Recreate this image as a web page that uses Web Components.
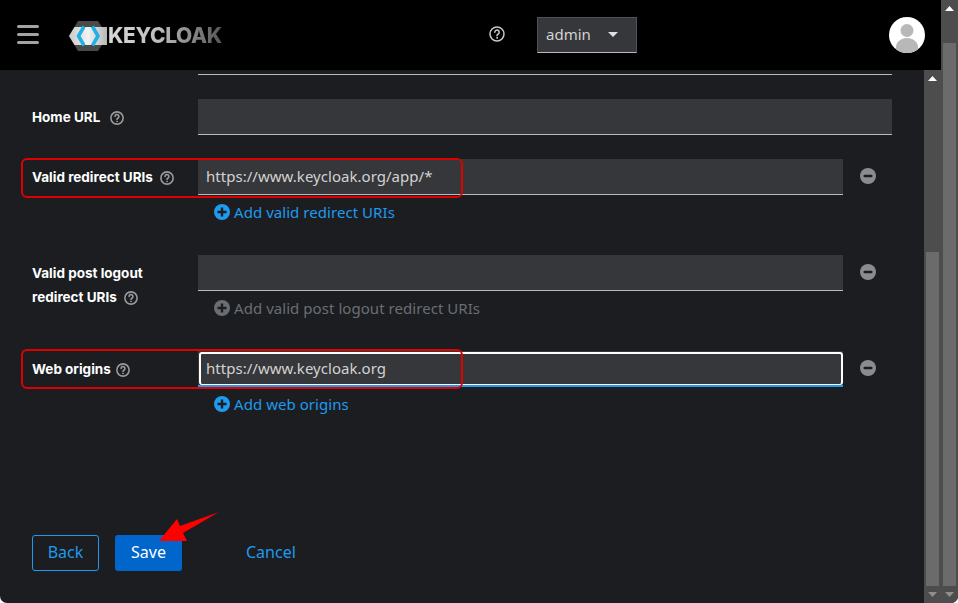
<!DOCTYPE html>
<html lang="en">
<head>
<meta charset="utf-8">
<title>Keycloak client settings</title>
<style>
  html, body { margin: 0; height: 603px; overflow: hidden; background: #fff; }
  body { font-family: "Inter", "Liberation Sans", sans-serif; color: #e0e0e0; }
</style>
</head>
<body>
<kc-app>
  <kc-header slot="header"></kc-header>
  <kc-form-row stub></kc-form-row>
  <kc-form-row label="Home URL" style="--help-gap:10px"><kc-input></kc-input></kc-form-row>
  <kc-form-row label="Valid redirect URIs" removable add="Add valid redirect URIs">
    <kc-input>https://www.keycloak.org/app/*</kc-input>
  </kc-form-row>
  <kc-form-row label="Valid post logout redirect URIs" removable disabled add="Add valid post logout redirect URIs">
    <kc-input></kc-input>
  </kc-form-row>
  <kc-form-row label="Web origins" removable add="Add web origins" style="--help-gap:5px">
    <kc-input focused>https://www.keycloak.org</kc-input>
  </kc-form-row>
  <kc-actions></kc-actions>
  <kc-callout slot="overlay" style="left:21px;top:88px;width:442px;height:40px"></kc-callout>
  <kc-callout slot="overlay" style="left:21px;top:279px;width:442px;height:40px"></kc-callout>
  <kc-arrow slot="overlay"></kc-arrow>
</kc-app>

<script>
// small shared icons, all drawn on a 16 box
const helpIcon = (size, width = 1.5) => `<svg width="${size}" height="${size}" viewBox="0 0 16 16" fill="none" stroke="currentColor" stroke-width="${width}" stroke-linecap="round">
  <circle cx="8" cy="8" r="7"/>
  <path d="M5.800 6.200a2.200 2.200 0 1 1 3.500 1.800c-.8.500-1.300.9-1.300 1.800"/>
  <circle cx="8" cy="11.900" r=".5" stroke-width="1"/>
</svg>`

class KcScrollbar extends HTMLElement {
  constructor () {
    super()
    this.attachShadow({ mode: 'open' })
    this.shadowRoot.innerHTML = `<style>
      :host { display: flex; flex-direction: column; width: 17px; flex: none; background: #4d4d4d; }
      .end { height: 17px; flex: none; display: flex; align-items: center; justify-content: center; }
      .track { flex: 1; display: flex; flex-direction: column; padding: var(--thumb-offset, 0) 2px 0; min-height: 0; }
      .thumb { flex: 1; background: #6b6b6b; }
      svg { display: block; }
      .down { color: #8f8f8f; }
      .up { color: #fff; }
    </style>
    <div class="end up"><svg width="9" height="5" viewBox="0 0 9 5"><path d="M4.500 0 9 5H0z" fill="currentColor"/></svg></div>
    <div class="track"><div class="thumb"></div></div>
    <div class="end down"><svg width="9" height="5" viewBox="0 0 9 5"><path d="M0 0h9L4.500 5z" fill="currentColor"/></svg></div>`
  }
}
customElements.define('kc-scrollbar', KcScrollbar)

class KcHeader extends HTMLElement {
  constructor () {
    super()
    this.attachShadow({ mode: 'open' })
    this.shadowRoot.innerHTML = `<style>
      :host { display: flex; align-items: center; height: 70px; background: #000; flex: none; color: #b8bbbe; }
      .burger { margin-left: 17px; width: 22px; display: flex; flex-direction: column; gap: 5px; margin-top: -1px; }
      .burger i { display: block; height: 3px; border-radius: 1.500px; background: #a3a3a3; }
      .logo { display: flex; align-items: center; margin-left: 30px; width: 152px; margin-bottom: -1px; }
      .logo svg { flex: none; }
      .word { font: 800 21px/1 "Inter", "Liberation Sans", sans-serif; letter-spacing: -.4px;
        background: linear-gradient(90deg, #d8d8d8, #bdbdbd 45%, #555); -webkit-background-clip: text; background-clip: text; color: transparent; }
      .help { margin-left: 268px; margin-bottom: 2px; display: flex; color: #c8c8c8; }
      .select { margin-left: 32px; box-sizing: border-box; width: 100px; height: 36px; display: flex; align-items: center;
        background: #36373a; border: 1px solid #4f5255; border-bottom-color: #b8bbbe; padding: 0 0 2px 8px;
        font: 15px/1 "Noto Sans", sans-serif; color: #d2d2d2; }
      .select svg { margin-left: 17px; }
      .avatar { margin-left: auto; margin-right: 16px; width: 36px; height: 36px; display: block; }
    </style>
    <div class="burger"><i></i><i></i><i></i></div>
    <div class="logo">
      <svg width="39" height="30" viewBox="0 0 39 30">
        <defs><linearGradient id="band" x1="0" x2="1" y1="0" y2="0"><stop offset="0" stop-color="#c9c9c9"/><stop offset=".5" stop-color="#f2f2f2"/><stop offset="1" stop-color="#b5b5b5"/></linearGradient></defs>
        <path d="M9 0h20l9.500 15L29 30H9L0 15z" fill="#4a4a4a"/>
        <path d="M0 15 5.500 6H38v18H5.500z" fill="url(#band)"/>
        <path d="M15 5.500 9.500 15l5.500 9.500" fill="none" stroke="#1fb0e8" stroke-width="3.500"/>
        <path d="M23.500 5.500 29 15l-5.500 9.500" fill="none" stroke="#1fb0e8" stroke-width="3.500"/>
      </svg>
      <span class="word">KEYCLOAK</span>
    </div>
    <div class="help">${helpIcon(16)}</div>
    <div class="select">admin
      <svg width="10" height="5" viewBox="0 0 10 5"><path d="M0 0h10L5 5z" fill="#e0e0e0"/></svg>
    </div>
    <svg class="avatar" viewBox="0 0 36 36">
      <defs><clipPath id="c"><circle cx="18" cy="18" r="18"/></clipPath></defs>
      <circle cx="18" cy="18" r="18" fill="#fff"/>
      <g clip-path="url(#c)" fill="#b8b8b8">
        <circle cx="18" cy="13.500" r="6.500"/>
        <path d="M7 36v-6c0-5 5-9 11-9s11 4 11 9v6z"/>
      </g>
    </svg>`
  }
}
customElements.define('kc-header', KcHeader)

class KcInput extends HTMLElement {
  constructor () {
    super()
    this.attachShadow({ mode: 'open' })
    this.shadowRoot.innerHTML = `<style>
      :host { display: flex; flex: 1; min-width: 0; box-sizing: border-box; height: 36px; align-items: center; padding: 0 8px 1px;
        background: #36373a; border-bottom: 1px solid #b8bbbe; font-size: 15px; letter-spacing: .03px; color: #d2d2d2;
        font-family: "Noto Sans", sans-serif; position: relative; }
      :host([focused]) { border-bottom: 2px solid #1f9aee; }
      :host([focused])::after { content: ""; position: absolute; left: 1px; right: 0; top: 1px; bottom: 0;
        border: 2px solid #fff; border-bottom-width: 1px; border-radius: 3px; }
    </style><slot></slot>`
  }
}
customElements.define('kc-input', KcInput)

class KcFormRow extends HTMLElement {
  constructor () {
    super()
    this.attachShadow({ mode: 'open' })
  }

  connectedCallback () {
    const label = this.getAttribute('label')
    const add = this.getAttribute('add')
    const minus = this.hasAttribute('removable')
      ? `<svg class="minus" width="16" height="16" viewBox="0 0 16 16"><circle cx="8" cy="8" r="8" fill="#8a8d90"/><rect x="3.500" y="6.800" width="9" height="2.400" rx="1" fill="#1b1d21"/></svg>`
      : ''
    const addLink = add
      ? `<div class="add"><svg width="16" height="16" viewBox="0 0 16 16"><circle cx="8" cy="8" r="8" fill="currentColor"/><path d="M8 3.500v9M3.500 8h9" stroke="#1b1d21" stroke-width="2.400"/></svg><span>${add}</span></div>`
      : ''
    this.shadowRoot.innerHTML = `<style>
      :host { display: grid; grid-template-columns: 166px 1fr; margin-bottom: 24px; }
      :host([stub]) { height: 5px; }
      :host([stub]) .field { height: 5px; box-sizing: border-box; border-bottom: 1px solid #b8bbbe; }
      .label { padding: 6px 10px 0 0; font: 700 13.500px/24px "Inter", "Liberation Sans", sans-serif; color: #fff; }
      .q { display: inline-flex; vertical-align: -3px; margin-left: var(--help-gap, 7px); color: #9a9a9a; }
      .line { display: flex; align-items: flex-start; }
      .minus { flex: none; margin: 9px 16px 0 17px; }
      .add { box-sizing: border-box; height: 36px; padding: 0 0 2px 16px; display: flex; align-items: center; gap: 4px; color: #1f9aee;
        font: 15px/1 "Noto Sans", sans-serif; letter-spacing: .05px; }
      :host([disabled]) .add { color: #6a6e73; }
    </style>
    <div class="label">${label ? `${label}<span class="q">${helpIcon(14, 1.800)}</span>` : ''}</div>
    <div class="field">
      <div class="line"><slot></slot>${minus}</div>
      ${addLink}
    </div>`
  }
}
customElements.define('kc-form-row', KcFormRow)

class KcActions extends HTMLElement {
  constructor () {
    super()
    this.attachShadow({ mode: 'open' })
    this.shadowRoot.innerHTML = `<style>
      :host { display: flex; gap: 16px; margin-top: 112px; font: 16px/1 "Noto Sans", sans-serif; }
      div { box-sizing: border-box; height: 36px; padding-bottom: 2px; display: flex; align-items: center; justify-content: center; border-radius: 3px; }
      .back { width: 67px; border: 1px solid #1f9aee; color: #1f9aee; }
      .save { width: 67px; background: #06c; color: #fff; }
      .cancel { margin-left: 48px; color: #1f9aee; }
    </style>
    <div class="back">Back</div><div class="save">Save</div><div class="cancel">Cancel</div>`
  }
}
customElements.define('kc-actions', KcActions)

// red annotation rectangle lying over the form
class KcCallout extends HTMLElement {
  constructor () {
    super()
    this.attachShadow({ mode: 'open' })
    this.shadowRoot.innerHTML = `<style>
      :host { position: absolute; box-sizing: border-box; border: 2px solid #e00000; border-radius: 6px; }
    </style>`
  }
}
customElements.define('kc-callout', KcCallout)

class KcArrow extends HTMLElement {
  constructor () {
    super()
    this.attachShadow({ mode: 'open' })
    // coordinates are relative to the scroll pane, which starts at y=70
    this.shadowRoot.innerHTML = `<style>
      :host { position: absolute; left: 155px; top: 438px; width: 70px; height: 40px; }
      svg { display: block; }
    </style>
    <svg width="70" height="40" viewBox="155 508 70 40"><path d="M159 541 177 519 180 526 219 512 183 533 187 541z" fill="#f00"/></svg>`
  }
}
customElements.define('kc-arrow', KcArrow)

class KcApp extends HTMLElement {
  constructor () {
    super()
    this.attachShadow({ mode: 'open' })
    this.shadowRoot.innerHTML = `<style>
      :host { display: flex; width: 958px; height: 603px; overflow: hidden; border-radius: 0 0 7px 7px; background: #1b1d21; }
      .col { flex: 1; min-width: 0; display: flex; flex-direction: column; }
      .body { flex: 1; min-height: 0; display: flex; }
      .pane { flex: 1; min-width: 0; position: relative; }
      .form { padding: 0 32px; }
      .inner { --thumb-offset: 165px; }
      .outer { --thumb-offset: 26px; }
    </style>
    <div class="col">
      <slot name="header"></slot>
      <div class="body">
        <div class="pane">
          <div class="form"><slot></slot></div>
          <slot name="overlay"></slot>
        </div>
        <kc-scrollbar class="inner"></kc-scrollbar>
      </div>
    </div>
    <kc-scrollbar class="outer"></kc-scrollbar>`
  }
}
customElements.define('kc-app', KcApp)
</script>
</body>
</html>
